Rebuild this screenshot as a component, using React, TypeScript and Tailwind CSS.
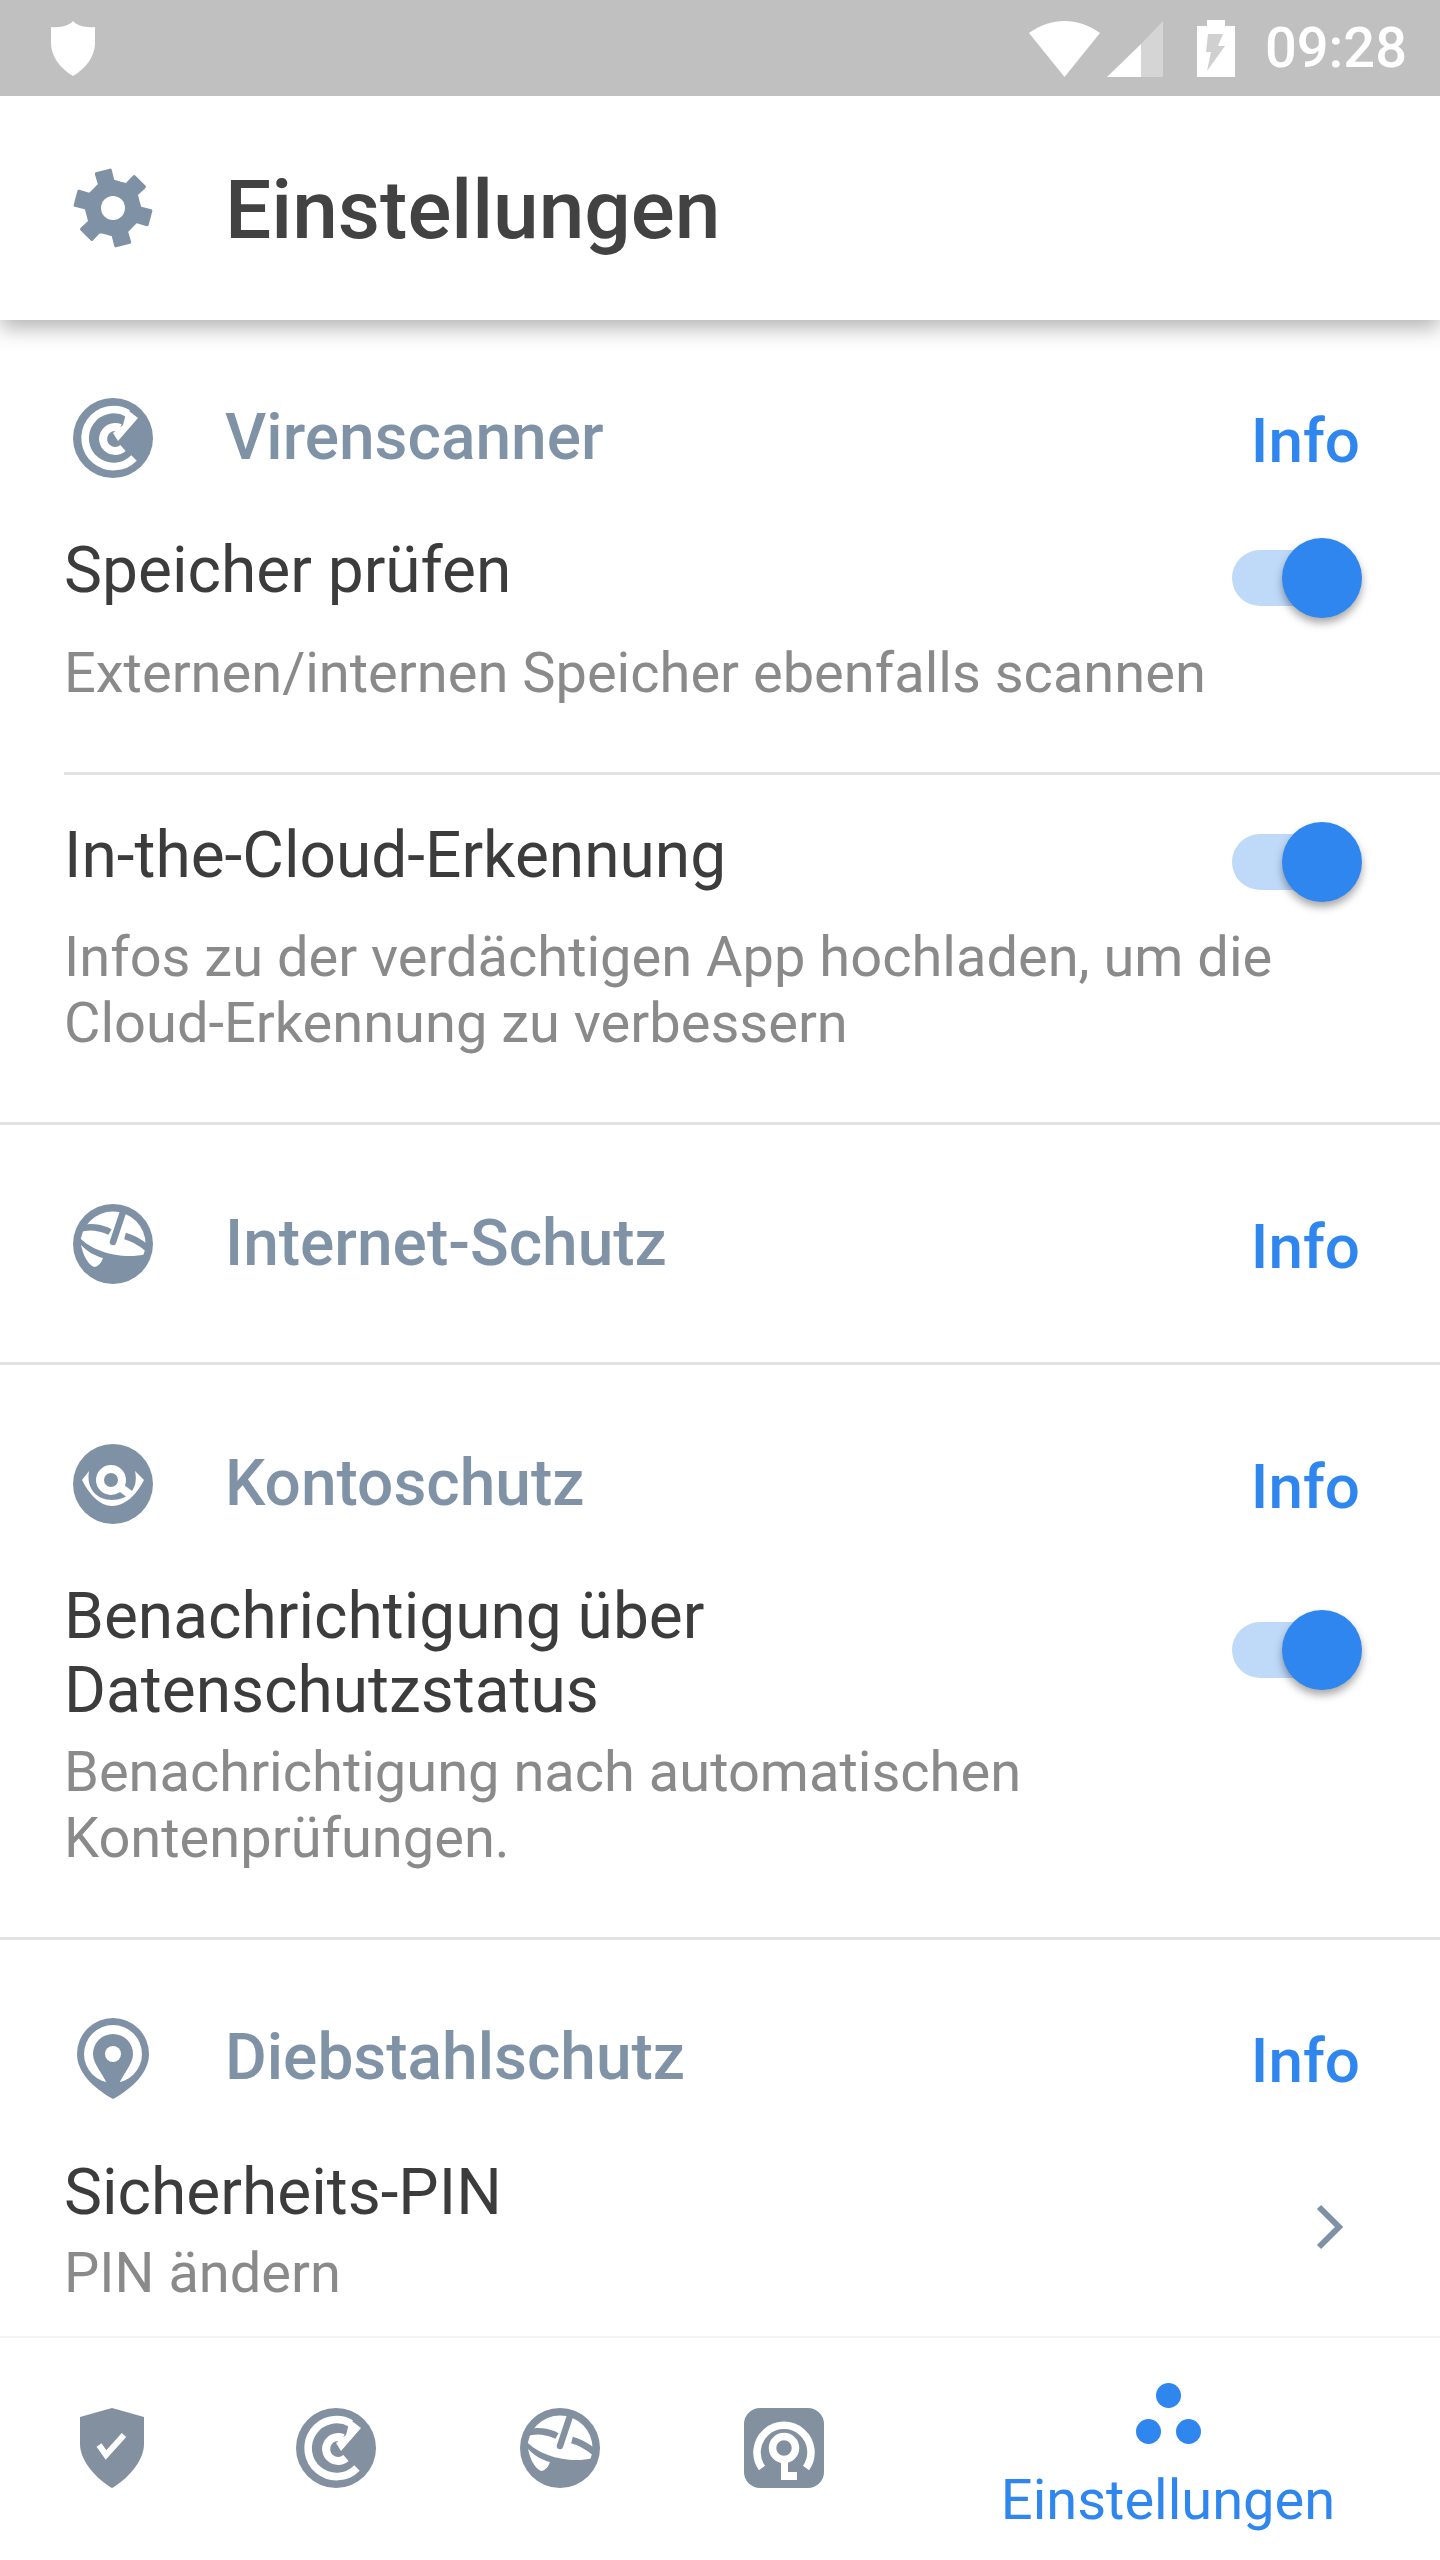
import type { ReactNode } from "react";

const slate = "#7f91a5";
const navSlate = "#8290a0";

function gearPath() {
  const pts: string[] = [];
  for (let i = 0; i < 6; i++) {
    const a = -105 + i * 60;
    const list: [number, number][] = [
      [a - 30, 26],
      [a - 15, 27],
      [a - 11, 38],
      [a + 11, 38],
      [a + 15, 27],
    ];
    for (const [deg, r] of list) {
      const t = (deg * Math.PI) / 180;
      pts.push(`${(40 + r * Math.cos(t)).toFixed(1)} ${(40 + r * Math.sin(t)).toFixed(1)}`);
    }
  }
  return "M" + pts.join("L") + "Z";
}

function GearIcon() {
  return (
    <svg width="80" height="80" viewBox="0 0 80 80">
      <path d={gearPath()} fill={slate} stroke={slate} strokeWidth="3" strokeLinejoin="round" />
      <circle cx="40" cy="40" r="12" fill="#fff" />
    </svg>
  );
}

function ScanIcon({ color = slate }: { color?: string }) {
  return (
    <svg width="80" height="80" viewBox="0 0 80 80">
      <circle cx="40" cy="40" r="40" fill={color} />
      <path d="M61 60A28.5 28.5 0 1 1 55 15.5" fill="none" stroke="#fff" strokeWidth="7.6" />
      <path d="M54 11.5L65 20L45 43L40 35L50 27Z" fill="#fff" />
      <path d="M50 50A12 12 0 1 1 47 30" fill="none" stroke="#fff" strokeWidth="8" />
    </svg>
  );
}

function GlobeIcon({ color = slate }: { color?: string }) {
  return (
    <svg width="80" height="80" viewBox="0 0 80 80">
      <circle cx="40" cy="40" r="40" fill={color} />
      <circle cx="40" cy="40" r="32.5" fill="#fff" />
      <path d="M50 8L40 38" stroke={color} strokeWidth="6.5" strokeLinecap="round" />
      <path d="M6 25C16 22 28 23 37 28" fill="none" stroke={color} strokeWidth="6.5" />
      <path d="M52 32C60 34 68 39 74 44" fill="none" stroke={color} strokeWidth="6.5" />
      <path d="M7 34C20 48 50 56 73 50L73 60L60 73L20 73L7 60Z" fill={color} />
      <path d="M8 41C15 48 22 52 30 54C28 60 24 63 21 63C14 60 10 50 8 41Z" fill="#fff" />
    </svg>
  );
}

function EyeIcon() {
  return (
    <svg width="80" height="80" viewBox="0 0 80 80">
      <circle cx="40" cy="40" r="40" fill={slate} />
      <path d="M9 36L16 27C13 45 24 56 39 56C55 56 66 45 62 27L71 36C64 50 52 62 39 62C27 62 16 50 9 36Z" fill="#fff" />
      <circle cx="38" cy="36" r="11" fill="none" stroke="#fff" strokeWidth="8" />
      <path d="M47 43L59 52" stroke="#fff" strokeWidth="8" />
    </svg>
  );
}

function PinIcon() {
  return (
    <svg width="72" height="81" viewBox="0 0 72 81">
      <path d="M36 0A36 36 0 0 1 72 36C72 54 56 70 36 81C16 70 0 54 0 36A36 36 0 0 1 36 0Z" fill={slate} />
      <circle cx="36" cy="36" r="29" fill="#fff" />
      <path d="M36 16A20 20 0 0 1 56 36C56 46 46 56 42 66L36 72L30 66C26 56 16 46 16 36A20 20 0 0 1 36 16Z" fill={slate} />
      <circle cx="36" cy="36" r="8" fill="#fff" />
    </svg>
  );
}

function ShieldCheckIcon() {
  return (
    <svg width="64" height="80" viewBox="0 0 64 80">
      <path d="M32 0L64 9L64 36C64 54 46 72 32 80C18 72 0 54 0 36L0 9Z" fill={navSlate} />
      <path d="M19 37L26 47L44 27" fill="none" stroke="#fff" strokeWidth="6" />
    </svg>
  );
}

function KeyIcon() {
  return (
    <svg width="80" height="80" viewBox="0 0 80 80">
      <rect width="80" height="80" rx="16" fill={navSlate} />
      <path d="M18 60A27 27 0 1 1 62 60" fill="none" stroke="#fff" strokeWidth="7.5" />
      <circle cx="40" cy="40" r="11.5" fill="none" stroke="#fff" strokeWidth="7.5" />
      <path d="M37 50H44V64H53V72H37Z" fill="#fff" />
    </svg>
  );
}

function StatusBar() {
  return (
    <div className="relative z-20 flex h-[96px] items-center bg-[#c0c0c0] pl-[51px] pr-[33px]">
      <svg width="44" height="55" viewBox="0 0 44 55" className="mt-[1px]">
        <path d="M22 0C25 4 34 7 44 6L44 22C44 36 34 48 22 55C10 48 0 36 0 22L0 6C10 7 19 4 22 0Z" fill="#fff" />
      </svg>
      <div className="ml-auto flex items-center">
        <svg width="71" height="56" viewBox="0 0 71 56" className="mt-[2px]">
          <path d="M0 12C22 -4 49 -4 71 12L35.5 56Z" fill="#fff" />
        </svg>
        <svg width="56" height="56" viewBox="0 0 56 56" className="ml-[7px] mt-[2px]">
          <path d="M56 0V56H34V23Z" fill="#d5d5d5" />
          <path d="M34 23V56H0Z" fill="#fff" />
        </svg>
        <svg width="38" height="57" viewBox="0 0 38 57" className="ml-[34px] mt-[1px]">
          <path d="M10 0H28V6H38V57H0V6H10Z" fill="#fff" />
          <path d="M11 14H26L21 26H28L10 51L14 32H9Z" fill="#c0c0c0" fillOpacity="0.75" />
        </svg>
        <span className="ml-[30px] font-['Roboto',sans-serif] text-[56px] font-medium leading-none text-white">09:28</span>
      </div>
    </div>
  );
}

function Toggle({ className }: { className: string }) {
  return (
    <div className={`relative h-[56px] w-[120px] shrink-0 rounded-full bg-[#bfdaf9] ${className}`}>
      <div className="absolute left-[50px] top-[-12px] h-[80px] w-[80px] rounded-full bg-[#2f86ee] shadow-[0_5px_8px_rgba(0,0,0,0.35)]" />
    </div>
  );
}

function SectionHead({ icon, title }: { icon: ReactNode; title: string }) {
  return (
    <div className="flex h-[80px] items-center pr-[80px]">
      <div className="flex w-[225px] shrink-0 justify-center">{icon}</div>
      <span className="text-[64px] font-medium leading-none text-[#8092a6]">{title}</span>
      <span className="ml-auto mt-[5px] text-[62px] font-medium leading-none text-[#2f86ee]">Info</span>
    </div>
  );
}

function Item({ title, desc, children, titleBox, descTop }: { title: string; desc: string; children: ReactNode; titleBox: string; descTop: string }) {
  return (
    <div>
      <div className={`flex items-start pl-[64px] pr-[88px] ${titleBox}`}>
        <div className="min-w-0 flex-1 pr-[60px] text-[64px] leading-[74px] text-[#3c3c3c]">{title}</div>
        {children}
      </div>
      <p className={`w-[1330px] pl-[64px] text-[56px] leading-[66px] text-[#8a8a8a] ${descTop}`}>{desc}</p>
    </div>
  );
}

export default function App() {
  return (
    <div className="flex h-[2560px] w-[1440px] flex-col overflow-hidden bg-white font-['Roboto',sans-serif]">
      <StatusBar />
      <header className="relative z-10 flex h-[224px] items-center bg-white shadow-[0_8px_20px_rgba(0,0,0,0.3)]">
        <div className="flex w-[225px] shrink-0 justify-center">
          <GearIcon />
        </div>
        <h1 className="mt-[4px] text-[82px] font-medium leading-none text-[#424242]">Einstellungen</h1>
      </header>

      <main className="h-[2016px] overflow-hidden">
        <section className="h-[805px] border-b-[3px] border-[#e2e2e2] pt-[78px]">
          <SectionHead icon={<ScanIcon />} title="Virenscanner" />
          <div className="ml-[64px] h-[297px] border-b-[3px] border-[#e2e2e2]">
            <div className="-ml-[64px] pt-[56px]">
              <Item title="Speicher prüfen" desc="Externen/internen Speicher ebenfalls scannen" titleBox="h-[74px]" descTop="mt-[32px]">
                <Toggle className="mt-[16px]" />
              </Item>
            </div>
          </div>
          <div className="pt-[44px]">
            <Item title="In-the-Cloud-Erkennung" desc="Infos zu der verdächtigen App hochladen, um die Cloud-Erkennung zu verbessern" titleBox="h-[74px]" descTop="mt-[31px]">
              <Toggle className="mt-[15px]" />
            </Item>
          </div>
        </section>

        <section className="h-[240px] border-b-[3px] border-[#e2e2e2] pt-[79px]">
          <SectionHead icon={<GlobeIcon />} title="Internet-Schutz" />
        </section>

        <section className="h-[575px] border-b-[3px] border-[#e2e2e2] pt-[79px]">
          <SectionHead icon={<EyeIcon />} title="Kontoschutz" />
          <div className="pt-[56px]">
            <Item title="Benachrichtigung über Datenschutzstatus" desc="Benachrichtigung nach automatischen Kontenprüfungen." titleBox="" descTop="mt-[11px]">
              <Toggle className="mt-[42px]" />
            </Item>
          </div>
        </section>

        <section className="pt-[78px]">
          <SectionHead icon={<PinIcon />} title="Diebstahlschutz" />
          <div className="flex items-center pt-[58px] pl-[64px] pr-[96px]">
            <div className="flex-1">
              <div className="text-[64px] leading-[74px] text-[#3c3c3c]">Sicherheits-PIN</div>
              <div className="mt-[10px] text-[56px] leading-[66px] text-[#8a8a8a]">PIN ändern</div>
            </div>
            <svg width="30" height="48" viewBox="0 0 30 48" fill="none" className="-mt-[8px]">
              <path d="M5 4L25 24L5 44" stroke={slate} strokeWidth="6" />
            </svg>
          </div>
        </section>
      </main>

      <nav className="grid h-[224px] grid-cols-[224px_224px_224px_224px_544px] border-t-2 border-[#f3f3f3] bg-white">
        <div className="flex justify-center pt-[70px]"><ShieldCheckIcon /></div>
        <div className="flex justify-center pt-[70px]"><ScanIcon color={navSlate} /></div>
        <div className="flex justify-center pt-[70px]"><GlobeIcon color={navSlate} /></div>
        <div className="flex justify-center pt-[70px]"><KeyIcon /></div>
        <div className="flex flex-col items-center pt-[45px]">
          <div className="h-[25px] w-[25px] rounded-full bg-[#2f86ee]" />
          <div className="mt-[11px] flex gap-[15px]">
            <div className="h-[25px] w-[25px] rounded-full bg-[#2f86ee]" />
            <div className="h-[25px] w-[25px] rounded-full bg-[#2f86ee]" />
          </div>
          <span className="mt-[21px] text-[56px] leading-[70px] text-[#2f86ee]">Einstellungen</span>
        </div>
      </nav>
    </div>
  );
}
